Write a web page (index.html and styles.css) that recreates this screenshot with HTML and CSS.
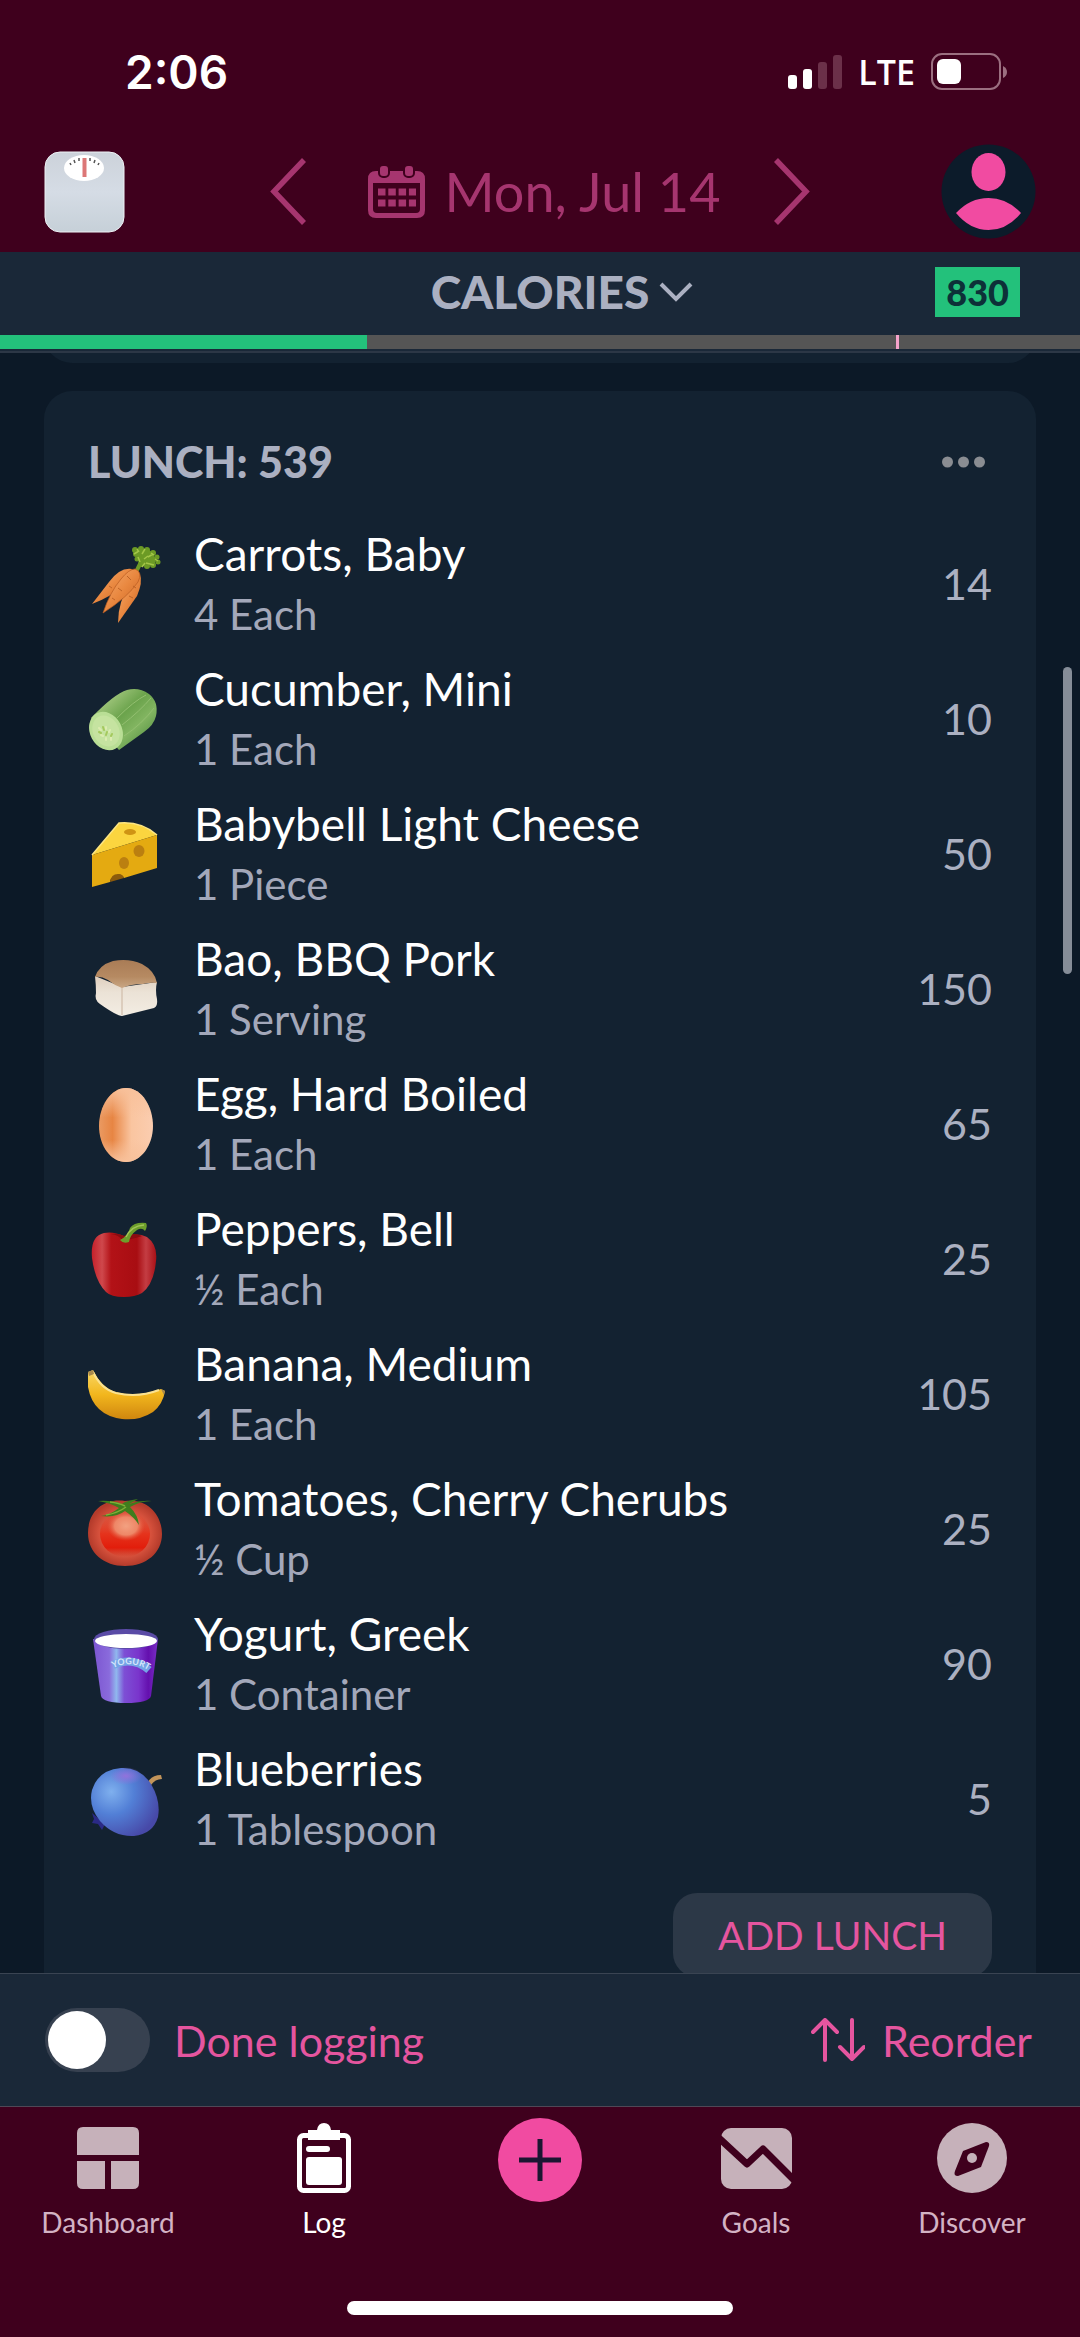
FILE: index.html
```html
<!DOCTYPE html>
<html lang="en">
<head>
<meta charset="utf-8">
<meta name="viewport" content="width=device-width, initial-scale=1">
<title>Food log</title>
<link rel="stylesheet" href="styles.css">
</head>
<body>
<div class="app">
  <header class="top">
    <div class="status">
      <span class="status-time">2:06</span>
      <div class="status-icons">
        <svg class="signal" viewBox="0 0 54 35" aria-hidden="true">
          <rect x="0" y="20" width="9" height="14" rx="3" fill="#fff"/>
          <rect x="15" y="14" width="9" height="20" rx="3" fill="#fff"/>
          <rect x="30" y="7" width="9" height="27" rx="3" fill="#6b3049"/>
          <rect x="45" y="0" width="9" height="34" rx="3" fill="#6b3049"/>
        </svg>
        <span class="status-net">LTE</span>
        <svg class="battery" viewBox="0 0 76 38" aria-hidden="true">
          <rect x="1" y="1" width="68" height="35" rx="10" fill="none" stroke="#9b6f80" stroke-width="2"/>
          <rect x="6" y="6" width="24" height="25" rx="6" fill="#fff"/>
          <path d="M72 13q4 2 4 6t-4 6z" fill="#9b6f80"/>
        </svg>
      </div>
    </div>
    <div class="header-row">
      <button class="icon-button" type="button" aria-label="Weigh in">
        <svg class="scale" viewBox="0 0 81 82">
          <defs><linearGradient id="scaleFill" x1="0" y1="0" x2="0" y2="1"><stop offset="0" stop-color="#ccd2da"/><stop offset=".5" stop-color="#d5dce5"/><stop offset="1" stop-color="#c6d0d8"/></linearGradient></defs>
          <rect x="1" y="1" width="79" height="80" rx="15" fill="url(#scaleFill)" stroke="#eef1f5" stroke-width="1"/>
          <ellipse cx="40" cy="17" rx="20" ry="13" fill="#fff"/>
          <path d="M40.500 7v19" stroke="#dc7777" stroke-width="4"/>
          <path d="M27 14l-1-2M31 12l-1-3M35 10v-3M46 10v-3M50 12l1-3M54 14l1-2" stroke="#555" stroke-width="1.500"/>
        </svg>
      </button>
      <div class="date-nav">
        <button class="icon-button" type="button" aria-label="Previous day">
          <svg class="chevron" viewBox="0 0 37 67"><path d="M34 2L4 33.500L34 65" fill="none" stroke="#a6356f" stroke-width="5.500"/></svg>
        </button>
        <button class="date-button" type="button">
          <svg class="calendar" viewBox="0 0 57 53">
            <path fill="#a6356f" fill-rule="evenodd" d="M8 6h41q8 0 8 8v31q0 8-8 8H8q-8 0-8-8V14q0-8 8-8zM5 18v26q0 4 4 4h39q4 0 4-4V18z"/>
            <rect x="11" y="0" width="10" height="12" rx="4" fill="#a6356f" stroke="#3f001d" stroke-width="2"/>
            <rect x="36" y="0" width="10" height="12" rx="4" fill="#a6356f" stroke="#3f001d" stroke-width="2"/>
            <path d="M10 27h38M10 38h38" stroke="#a6356f" stroke-width="7" stroke-dasharray="7.500 2.800"/>
          </svg>
          <span>Mon, Jul 14</span>
        </button>
        <button class="icon-button" type="button" aria-label="Next day">
          <svg class="chevron" viewBox="0 0 37 67"><path d="M3 2l30 31.500L3 65" fill="none" stroke="#a6356f" stroke-width="5.500"/></svg>
        </button>
      </div>
      <button class="icon-button icon-button-end" type="button" aria-label="Profile">
        <svg class="avatar" viewBox="0 0 95 95">
          <circle cx="47.500" cy="47.500" r="47" fill="#0c1b2a"/>
          <ellipse cx="47.500" cy="28" rx="17" ry="19" fill="#f14ba1"/>
          <path d="M15 69q14-15 32.500-15T80 69Q66 86 47.500 86T15 69z" fill="#f14ba1"/>
        </svg>
      </button>
    </div>
  </header>

  <section class="summary">
    <div class="summary-row">
      <button class="nutrient" type="button">
        <span class="nutrient-name">CALORIES</span>
        <svg class="nutrient-arrow" viewBox="0 0 34 20"><path d="M2 2l15 15L32 2" fill="none" stroke="#abb0c1" stroke-width="4"/></svg>
      </button>
      <span class="budget">830</span>
    </div>
    <div class="progress">
      <div class="progress-fill" style="width: 34%"></div>
      <div class="progress-mark" style="left: 83%"></div>
    </div>
  </section>

  <main class="log">
    <div class="card card-previous"></div>
    <section class="card">
      <div class="card-head">
        <h2 class="card-title">LUNCH: 539</h2>
        <button class="icon-button more" type="button" aria-label="Lunch options">
          <svg class="dots" viewBox="0 0 43 12" fill="#8a8d92"><circle cx="5.500" cy="6" r="5.500"/><circle cx="21.500" cy="6" r="5.500"/><circle cx="37.500" cy="6" r="5.500"/></svg>
        </button>
      </div>
      <ul class="foods">
        <li class="food">
          <svg class="food-icon" viewBox="0 0 84 84" aria-hidden="true">
            <defs><linearGradient id="carrot" x1="0" y1="0" x2="1" y2="1"><stop offset="0" stop-color="#f5ad72"/><stop offset=".5" stop-color="#e98840"/><stop offset="1" stop-color="#c8601f"/></linearGradient></defs>
            <path d="M52 30q3-7 8-14" stroke="#6f9c26" stroke-width="4" fill="none"/>
            <g fill="#6c9a25"><circle cx="51" cy="8" r="3"/><circle cx="57" cy="7" r="3"/><circle cx="63" cy="8" r="3"/><circle cx="69" cy="11" r="3"/><circle cx="73" cy="15" r="2.500"/><circle cx="74" cy="20" r="2.500"/><circle cx="69" cy="23" r="3"/><circle cx="63" cy="24" r="3"/><circle cx="57" cy="22" r="3"/><circle cx="53" cy="17" r="2.500"/><circle cx="52" cy="12" r="3"/><circle cx="61" cy="15" r="8"/><circle cx="67" cy="18" r="5"/></g>
            <path d="M50 12l5-3M58 12l3-5M64 15l5-3M62 21l8 2M56 20l-2-5M67 11l3 2M60 17l4-3M71 17l3 2M58 25l3-4M53 7l2 3" stroke="#a3c648" stroke-width="1.500" fill="none"/>
            <path d="M48 27Q36 25 25 40L8 62Q27 55 41 42z" fill="url(#carrot)"/>
            <path d="M56 32q3 8-3 22L34 81q0-22 12-39z" fill="url(#carrot)"/>
            <path d="M51 27q8 3 3 13Q44 55 19 71q7-21 18-34 8-10 14-10z" fill="url(#carrot)" stroke="#b85a20" stroke-width=".7"/>
            <path d="M28 56l3 2M34 46l4 3M43 34l4 4M49 44l3 2M45 54l4 2M25 44l3 2" stroke="#bd6327" stroke-width="1"/>
          </svg>
          <div class="food-text"><span class="food-name">Carrots, Baby</span><span class="food-amount">4 Each</span></div>
          <span class="food-calories">14</span>
        </li>
        <li class="food">
          <svg class="food-icon" viewBox="0 0 84 84" aria-hidden="true">
            <defs><linearGradient id="cucumber" x1="0" y1="0" x2="1" y2="1"><stop offset=".1" stop-color="#b4d38e"/><stop offset=".45" stop-color="#6ba34c"/><stop offset=".65" stop-color="#82b561"/><stop offset="1" stop-color="#3f7f36"/></linearGradient></defs>
            <path d="M7 41Q30 17 43 13q12-3 22 4 10 8 7 22-2 9-12 16L35 73z" fill="url(#cucumber)"/>
            <path d="M33 41Q50 24 62 18M38 48q18-14 29-27M40 59q18-12 30-28" stroke="#93bf70" stroke-width="1" fill="none"/>
            <ellipse cx="22" cy="54" rx="16" ry="20" transform="rotate(-28 22 54)" fill="#b9de95"/>
            <ellipse cx="22" cy="54" rx="13" ry="16" transform="rotate(-28 22 54)" fill="#c5e3a0"/>
            <path d="M15 51l2 2M17 58l2 1M22 50v2M26 53l-1 2M22 61v2M27 60v3" stroke="#dcecb0" stroke-width="2" stroke-linecap="round"/>
            <path d="M19 50l1 3M23 55l-1 3M15 55l2 1M28 57l-1 2" stroke="#a4c95d" stroke-width="2" stroke-linecap="round"/>
          </svg>
          <div class="food-text"><span class="food-name">Cucumber, Mini</span><span class="food-amount">1 Each</span></div>
          <span class="food-calories">10</span>
        </li>
        <li class="food">
          <svg class="food-icon" viewBox="0 0 84 84" aria-hidden="true">
            <path d="M8 43L35 11q22-2 38 12z" fill="#fbd53f"/>
            <path d="M8 43l65-20v33l-33 10q-3-6-10-2-4 3-4 6L8 75z" fill="#e4aa11"/>
            <path d="M8 43L35 11q22-2 38 12" fill="none" stroke="#fde581" stroke-width="1.500"/>
            <ellipse cx="46" cy="20" rx="6" ry="3" fill="#cf9414"/>
            <ellipse cx="55" cy="39" rx="5.500" ry="6" fill="#bb7f10"/>
            <ellipse cx="40" cy="51" rx="5" ry="6" fill="#bb7f10"/>
            <path d="M26 70q1-8 8-8 5 0 6 4z" fill="#8c5b0c"/>
          </svg>
          <div class="food-text"><span class="food-name">Babybell Light Cheese</span><span class="food-amount">1 Piece</span></div>
          <span class="food-calories">50</span>
        </li>
        <li class="food">
          <svg class="food-icon" viewBox="0 0 84 84" aria-hidden="true">
            <defs>
              <linearGradient id="crust" x1="0" y1="0" x2="0" y2="1"><stop offset="0" stop-color="#a97c56"/><stop offset=".6" stop-color="#b68a62"/><stop offset="1" stop-color="#c9a684"/></linearGradient>
              <linearGradient id="crumb" x1="0" y1="0" x2="0" y2="1"><stop offset="0" stop-color="#dfcebd"/><stop offset=".4" stop-color="#ebe2d6"/><stop offset="1" stop-color="#f3ede3"/></linearGradient>
            </defs>
            <path d="M11 29l27 11 35-5q-2 8 0 17 1 7-3 9L38 69q-5 0-22-12-6-4-4-11 0-8-1-17z" fill="url(#crumb)"/>
            <path d="M38 40v28" stroke="#d6c5b3" stroke-width="1.500"/>
            <path d="M11 30q4-12 18-16 16-3 29 3 13 7 15 19-6-1-14 1-12 0-21 4-8-3-14-8-7-4-13-3z" fill="url(#crust)"/>
          </svg>
          <div class="food-text"><span class="food-name">Bao, BBQ Pork</span><span class="food-amount">1 Serving</span></div>
          <span class="food-calories">150</span>
        </li>
        <li class="food">
          <svg class="food-icon" viewBox="0 0 84 84" aria-hidden="true">
            <defs>
              <linearGradient id="egg" x1="0" y1="0" x2="1" y2="0"><stop offset="0" stop-color="#ea9a62"/><stop offset=".25" stop-color="#e78543"/><stop offset=".6" stop-color="#fac5a0"/><stop offset="1" stop-color="#fbcdb0"/></linearGradient>
              <linearGradient id="eggEnds" x1="0" y1="0" x2="0" y2="1"><stop offset="0" stop-color="#f8c19b"/><stop offset=".4" stop-color="#f8c19b" stop-opacity="0"/><stop offset=".7" stop-color="#f8c19b" stop-opacity="0"/><stop offset="1" stop-color="#f8c19b"/></linearGradient>
            </defs>
            <path d="M42 6c16 0 27 19 27 38S57 80 42 80 15 64 15 44 27 6 42 6z" fill="url(#egg)"/>
            <path d="M42 6c16 0 27 19 27 38S57 80 42 80 15 64 15 44 27 6 42 6z" fill="url(#eggEnds)"/>
          </svg>
          <div class="food-text"><span class="food-name">Egg, Hard Boiled</span><span class="food-amount">1 Each</span></div>
          <span class="food-calories">65</span>
        </li>
        <li class="food">
          <svg class="food-icon" viewBox="0 0 84 84" aria-hidden="true">
            <defs><linearGradient id="pepper" x1="0" y1="0" x2="1" y2="0"><stop offset="0" stop-color="#c5202a"/><stop offset=".16" stop-color="#cf484c"/><stop offset=".3" stop-color="#b31217"/><stop offset=".7" stop-color="#a80d12"/><stop offset=".84" stop-color="#c43d43"/><stop offset="1" stop-color="#a81016"/></linearGradient></defs>
            <path d="M20 16q9-2 20 3 14-4 23 1 11 8 9 24-2 23-14 32-7 4-18 4-13 0-18-5Q11 64 8 41 6 19 20 16z" fill="url(#pepper)"/>
            <path d="M27 17q8 1 11 6 9 0 20-4-9-4-18 0-6-3-13-2z" fill="#8b0b10"/>
            <path d="M36 23q8-4 10-12 4-6 16-5 2 3-1 8-3-4-8-1-7 5-8 12-6 2-9-2z" fill="#6d9e2b"/>
            <path d="M42 20q5-11 18-12" stroke="#a1c457" stroke-width="1.500" fill="none"/>
          </svg>
          <div class="food-text"><span class="food-name">Peppers, Bell</span><span class="food-amount">½ Each</span></div>
          <span class="food-calories">25</span>
        </li>
        <li class="food">
          <svg class="food-icon" viewBox="0 0 84 84" aria-hidden="true">
            <defs><linearGradient id="banana" x1="0" y1="0" x2="0" y2="1"><stop offset="0" stop-color="#f9d866"/><stop offset=".5" stop-color="#f2b61d"/><stop offset="1" stop-color="#cf860f"/></linearGradient></defs>
            <path d="M4 20l5-2q8 17 22 22 22 6 46-3l4 2q-2 13-12 21-14 9-31 7Q9 63 4 35z" fill="url(#banana)"/>
            <path d="M9 20q8 17 23 21 22 5 43-3" fill="none" stroke="#fbe290" stroke-width="2"/>
            <path d="M4 20l5-2 1 4-5 2zM77 37l4 2-1 4z" fill="#a8894c"/>
          </svg>
          <div class="food-text"><span class="food-name">Banana, Medium</span><span class="food-amount">1 Each</span></div>
          <span class="food-calories">105</span>
        </li>
        <li class="food">
          <svg class="food-icon" viewBox="0 0 84 84" aria-hidden="true">
            <defs>
              <radialGradient id="tomato"><stop offset="0" stop-color="#dc4f38"/><stop offset=".7" stop-color="#d6513c"/><stop offset="1" stop-color="#b43b2b"/></radialGradient>
              <linearGradient id="tomatoGlow" x1="0" y1="0" x2="0" y2="1"><stop offset="0" stop-color="#e4583f" stop-opacity="0"/><stop offset=".5" stop-color="#e5331c"/><stop offset=".8" stop-color="#e21d0b"/><stop offset="1" stop-color="#cf3320" stop-opacity="0"/></linearGradient>
              <radialGradient id="tomatoShine"><stop offset="0" stop-color="#f3a181"/><stop offset=".6" stop-color="#ee8767"/><stop offset="1" stop-color="#e4583f" stop-opacity="0"/></radialGradient>
            </defs>
            <path d="M41 14c23-3 37 14 37 33S62 79 41 79 4 66 4 46s14-35 37-32z" fill="url(#tomato)"/>
            <ellipse cx="41" cy="47" rx="25" ry="23" fill="url(#tomatoGlow)"/>
            <ellipse cx="42" cy="39" rx="19" ry="15" fill="url(#tomatoShine)"/>
            <path d="M14 14q14-1 24 3 3-3 16-5-5 3-9 5 11-4 23-3-12 0-22 6 8 8 9 18-5-8-14-14-9 7-24 5 9-1 18-8-8-5-21-7z" fill="#3f7d1d"/>
            <path d="M22 28q12-2 20-8M26 15q9 1 15 4" stroke="#7fae37" stroke-width="1.500" fill="none"/>
          </svg>
          <div class="food-text"><span class="food-name">Tomatoes, Cherry Cherubs</span><span class="food-amount">½ Cup</span></div>
          <span class="food-calories">25</span>
        </li>
        <li class="food">
          <svg class="food-icon" viewBox="0 0 84 84" aria-hidden="true">
            <defs>
              <linearGradient id="cup" x1="0" y1="0" x2="1" y2="0"><stop offset="0" stop-color="#7b55d0"/><stop offset=".25" stop-color="#8a6bdc"/><stop offset=".36" stop-color="#90b8ee"/><stop offset=".48" stop-color="#7d4fd5"/><stop offset=".7" stop-color="#7a35cc"/><stop offset=".85" stop-color="#6410ae"/><stop offset="1" stop-color="#7a2fc6"/></linearGradient>
              <path id="cupArc" d="M29 46q20-9 38 4"/>
            </defs>
            <path d="M9 17l8 57q2 7 25 7t25-7l7-57z" fill="url(#cup)"/>
            <ellipse cx="42" cy="17" rx="32" ry="10" fill="#5a4ba6"/>
            <ellipse cx="42" cy="19" rx="31" ry="7" fill="#fff"/>
            <path d="M29 43q20-9 36 5" stroke="#75a4e6" stroke-width="8" fill="none"/>
            <text class="cup-label"><textPath href="#cupArc">YOGURT</textPath></text>
          </svg>
          <div class="food-text"><span class="food-name">Yogurt, Greek</span><span class="food-amount">1 Container</span></div>
          <span class="food-calories">90</span>
        </li>
        <li class="food">
          <svg class="food-icon" viewBox="0 0 84 84" aria-hidden="true">
            <defs>
              <radialGradient id="berry" cx=".3" cy=".35" r=".75"><stop offset="0" stop-color="#7fb0ee"/><stop offset=".45" stop-color="#527fd6"/><stop offset="1" stop-color="#4749a8"/></radialGradient>
              <radialGradient id="berryTop"><stop offset="0" stop-color="#9272dc"/><stop offset="1" stop-color="#9272dc" stop-opacity="0"/></radialGradient>
            </defs>
            <path d="M8 56l2 6-2 4 6 1 4 6 3-6z" fill="#2b2a86"/>
            <path d="M64 25q4-7 13-7l1 4q-7 0-11 6z" fill="#c2945a"/>
            <path d="M37 11q19-1 30 16 10 17 7 33-5 17-24 19-20 1-34-15Q4 49 8 33q6-20 29-22z" fill="url(#berry)"/>
            <ellipse cx="42" cy="19" rx="16" ry="9" fill="url(#berryTop)"/>
          </svg>
          <div class="food-text"><span class="food-name">Blueberries</span><span class="food-amount">1 Tablespoon</span></div>
          <span class="food-calories">5</span>
        </li>
      </ul>
      <button class="add-button" type="button">ADD LUNCH</button>
    </section>
    <div class="scroll-thumb"></div>
  </main>

  <div class="actions">
    <label class="done"><input class="toggle" type="checkbox" role="switch"><span>Done logging</span></label>
    <button class="reorder" type="button">
      <svg class="reorder-icon" viewBox="0 0 54 44"><path d="M14 42V3M2 14L14 2l12 12M41 2v39M29 29l12 12 12-12" fill="none" stroke="#e5559f" stroke-width="4" stroke-linecap="round" stroke-linejoin="round"/></svg>
      <span>Reorder</span>
    </button>
  </div>

  <footer class="bottom">
    <nav class="tabs">
      <a class="tab" href="#dashboard">
        <span class="tab-icon"><svg width="62" height="62" viewBox="0 0 62 62" fill="#c6b1ba"><path d="M0 28V6q0-6 6-6h50q6 0 6 6v22zM0 34h28v28H6q-6 0-6-6zM34 34h28v22q0 6-6 6H34z"/></svg></span>
        <span>Dashboard</span>
      </a>
      <a class="tab tab-current" href="#log" aria-current="page">
        <span class="tab-icon"><svg width="54" height="70" viewBox="0 0 54 70"><rect x="2.500" y="12.500" width="49" height="55" rx="4" fill="none" stroke="#fff" stroke-width="5"/><path d="M11 17V7h9q1-7 7-7t7 7h9v10z" fill="#fff"/><rect x="9" y="23" width="24" height="6" rx="3" fill="#fff"/><rect x="9" y="34" width="36" height="28" rx="3" fill="#fff"/></svg></span>
        <span>Log</span>
      </a>
      <a class="tab tab-add" href="#add" aria-label="Add">
        <svg width="84" height="84" viewBox="0 0 84 84"><circle cx="42" cy="42" r="42" fill="#f14ba1"/><path d="M42 21v42M21 42h42" stroke="#1c1631" stroke-width="5"/></svg>
      </a>
      <a class="tab" href="#goals">
        <span class="tab-icon"><svg width="71" height="61" viewBox="0 0 71 61"><rect width="71" height="61" rx="10" fill="#c6b1ba"/><path d="M-2 10l28 26 16-15 31 31" fill="none" stroke="#3f001d" stroke-width="7" stroke-linejoin="round"/></svg></span>
        <span>Goals</span>
      </a>
      <a class="tab" href="#discover">
        <span class="tab-icon"><svg width="70" height="70" viewBox="0 0 70 70"><circle cx="35" cy="35" r="35" fill="#c6b1ba"/><path d="M26 28l23-9q4 0 3 4l-8 21-23 9q-5 0-3-5z" fill="#3f001d"/><circle cx="35" cy="35" r="5" fill="#c6b1ba"/></svg></span>
        <span>Discover</span>
      </a>
    </nav>
    <div class="home-indicator"></div>
  </footer>
</div>
</body>
</html>
```
FILE: styles.css
```css
* {
  box-sizing: border-box;
}

body {
  margin: 0;
  background: #0c1927;
  color: #fff;
  font-family: Lato, "Liberation Sans", sans-serif;
}

button {
  padding: 0;
  border: 0;
  background: none;
  color: inherit;
  font: inherit;
}

svg {
  display: block;
}

.app {
  display: flex;
  flex-direction: column;
  height: 100vh;
}

/* Status bar and date header */
.top {
  background: #3f001d;
}

.status {
  display: flex;
  align-items: center;
  justify-content: space-between;
  height: 144px;
  padding: 0 73px 0 125px;
  font-family: Inter, sans-serif;
}

.status-time {
  font-size: 46px;
  font-weight: 600;
}

.status-icons {
  display: flex;
  align-items: center;
  gap: 16px;
}

.signal {
  width: 54px;
  height: 35px;
}

.status-net {
  font-family: "Open Sans", sans-serif;
  font-size: 34px;
  font-weight: 600;
}

.battery {
  width: 76px;
  height: 38px;
}

.header-row {
  display: grid;
  grid-template-columns: 1fr auto 1fr;
  align-items: center;
  height: 108px;
  padding: 0 44px 14px;
}

.icon-button {
  width: max-content;
}

.icon-button-end {
  justify-self: end;
}

.scale {
  width: 81px;
  height: 82px;
}

.date-nav {
  display: flex;
  align-items: center;
  justify-content: space-between;
  width: 540px;
}

.chevron {
  width: 37px;
  height: 67px;
}

.date-button {
  display: flex;
  align-items: center;
  gap: 20px;
  padding-left: 8px;
  color: #a6356f;
  font-size: 54px;
  line-height: 64px;
}

.calendar {
  width: 57px;
  height: 53px;
}

.avatar {
  width: 95px;
  height: 95px;
}

/* Calorie budget */
.summary {
  background: #1a2838;
  border-bottom: 2px solid #2c3746;
}

.summary-row {
  display: grid;
  grid-template-columns: 1fr auto 1fr;
  align-items: center;
  height: 83px;
  padding: 0 60px 4px;
}

.nutrient {
  display: grid;
  grid-column: 2;
  grid-template-columns: 34px auto 34px;
  align-items: center;
  column-gap: 10px;
  color: #abb0c1;
  font-size: 46px;
  font-weight: 900;
  line-height: 56px;
}

.nutrient-name {
  grid-column: 2;
}

.nutrient-arrow {
  width: 34px;
  height: 20px;
}

.budget {
  justify-self: end;
  padding: 0 11px;
  background: #23c17b;
  color: #0d3038;
  font-size: 36px;
  font-weight: 900;
  line-height: 50px;
}

.progress {
  position: relative;
  height: 14px;
  margin-bottom: 2px;
  background: #555;
}

.progress-fill {
  height: 100%;
  background: #23c17b;
}

.progress-mark {
  position: absolute;
  top: 0;
  width: 3px;
  height: 100%;
  background: #f5a3cb;
}

/* Meal log */
.log {
  position: relative;
  flex: 1;
  min-height: 0;
  padding: 0 44px;
  overflow: hidden;
}

.card {
  display: flex;
  flex-direction: column;
  padding: 40px 44px;
  border-radius: 28px;
  background: #132231;
}

.card-previous {
  margin: -70px 0 28px;
}

.card-head {
  display: flex;
  align-items: center;
  justify-content: space-between;
  height: 60px;
  margin-bottom: 25px;
}

.card-title {
  margin: 0;
  color: #abb0c1;
  font-size: 43px;
  font-weight: 900;
}

.more {
  padding: 2px 7px 0 0;
}

.dots {
  width: 43px;
  height: 12px;
}

.foods {
  margin: 0;
  padding: 0;
  list-style: none;
}

.food {
  display: grid;
  grid-template-columns: 84px 1fr auto;
  align-items: center;
  column-gap: 26px;
  height: 135px;
  margin-left: -4px;
}

.food-icon {
  width: 84px;
  height: 84px;
}

.cup-label {
  fill: #d6e6fb;
  font-size: 9px;
  font-weight: 700;
}

.food-text {
  display: flex;
  flex-direction: column;
  font-size: 42px;
  line-height: 60px;
}

.food-name {
  font-size: 46px;
}

.food-amount {
  color: #a3a8ba;
}

.food-calories {
  color: #abb0c1;
  font-size: 43px;
}

.add-button {
  align-self: flex-end;
  height: 84px;
  margin-top: 27px;
  padding: 0 45px;
  border-radius: 24px;
  background: #2c3847;
  color: #e5559f;
  font-size: 39px;
}

.scroll-thumb {
  position: absolute;
  top: 314px;
  right: 8px;
  width: 9px;
  height: 307px;
  border-radius: 5px;
  background: #868d98;
}

/* Log actions */
.actions {
  display: flex;
  align-items: center;
  justify-content: space-between;
  height: 134px;
  padding: 0 48px 0 45px;
  border-top: 1px solid #3a4452;
  border-bottom: 1px solid #4f4756;
  background: #1a2838;
  color: #e5559f;
  font-size: 43px;
}

.done {
  display: flex;
  align-items: center;
  gap: 24px;
}

.toggle {
  display: flex;
  width: 105px;
  height: 64px;
  margin: 0;
  padding: 3px;
  border-radius: 32px;
  background: #374150;
  appearance: none;
}

.toggle::before {
  width: 58px;
  height: 58px;
  border-radius: 50%;
  background: #fff;
  content: "";
}

.toggle:checked {
  justify-content: flex-end;
  background: #23c17b;
}

.reorder {
  display: flex;
  align-items: center;
  gap: 17px;
}

.reorder-icon {
  width: 54px;
  height: 44px;
}

/* Tab bar */
.bottom {
  padding: 11px 0 22px;
  background: #3f001d;
}

.tabs {
  display: flex;
  height: 183px;
}

.tab {
  display: flex;
  flex: 1;
  flex-direction: column;
  align-items: center;
  color: #d3b3c4;
  font-size: 28px;
  line-height: 40px;
  text-decoration: none;
}

.tab-current {
  color: #fff;
}

.tab-icon {
  display: flex;
  align-items: center;
  justify-content: center;
  height: 80px;
  margin-bottom: 4px;
}

.home-indicator {
  width: 386px;
  height: 14px;
  margin: 0 auto;
  border-radius: 7px;
  background: #fff;
}
```
